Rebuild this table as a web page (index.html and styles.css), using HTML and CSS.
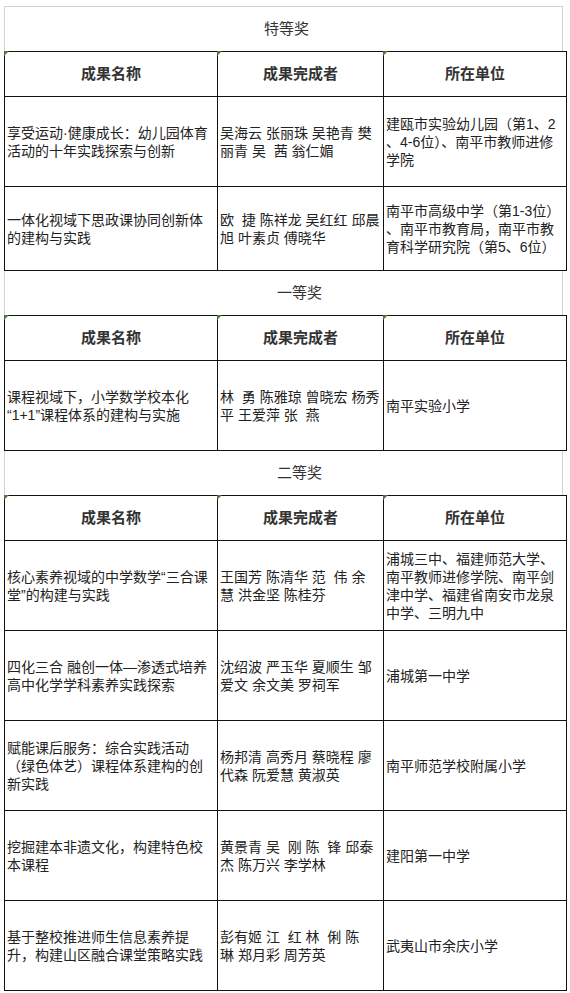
FILE: index.html
```html
<!DOCTYPE html>
<html lang="zh-CN">
<head>
<meta charset="utf-8">
<title>成果获奖名单</title>
<link rel="stylesheet" href="styles.css">
</head>
<body>
<div class="sheet">
  <section class="section">
    <div class="award award--first">特等奖</div>
    <div class="row row--head">
      <div class="cell cell--head">成果名称</div>
      <div class="cell cell--head">成果完成者</div>
      <div class="cell cell--head">所在单位</div>
    </div>
    <div class="row">
      <div class="cell">享受运动·健康成长：幼儿园体育<br>活动的十年实践探索与创新</div>
      <div class="cell">吴海云 张丽珠 吴艳青 樊<br>丽青 吴&nbsp; 茜 翁仁媚</div>
      <div class="cell">建瓯市实验幼儿园（第1、2<br>、4-6位）、南平市教师进修<br>学院</div>
    </div>
    <div class="row row--short">
      <div class="cell">一体化视域下思政课协同创新体<br>的建构与实践</div>
      <div class="cell">欧&nbsp; 捷 陈祥龙 吴红红 邱晨<br>旭 叶素贞 傅晓华</div>
      <div class="cell">南平市高级中学（第1-3位）<br>、南平市教育局，南平市教<br>育科学研究院（第5、6位）</div>
    </div>
  </section>

  <section class="section">
    <div class="award award--shift">一等奖</div>
    <div class="row row--head">
      <div class="cell cell--head">成果名称</div>
      <div class="cell cell--head">成果完成者</div>
      <div class="cell cell--head">所在单位</div>
    </div>
    <div class="row">
      <div class="cell">课程视域下，小学数学校本化<br>“1+1”课程体系的建构与实施</div>
      <div class="cell">林&nbsp; 勇 陈雅琼 曾晓宏 杨秀<br>平 王爱萍 张&nbsp; 燕</div>
      <div class="cell">南平实验小学</div>
    </div>
  </section>

  <section class="section">
    <div class="award award--shift">二等奖</div>
    <div class="row row--head">
      <div class="cell cell--head">成果名称</div>
      <div class="cell cell--head">成果完成者</div>
      <div class="cell cell--head">所在单位</div>
    </div>
    <div class="row">
      <div class="cell">核心素养视域的中学数学“三合课<br>堂”的构建与实践</div>
      <div class="cell">王国芳 陈清华 范&nbsp; 伟 余<br>慧 洪金坚 陈桂芬</div>
      <div class="cell">浦城三中、福建师范大学、<br>南平教师进修学院、南平剑<br>津中学、福建省南安市龙泉<br>中学、三明九中</div>
    </div>
    <div class="row">
      <div class="cell">四化三合 融创一体—渗透式培养<br>高中化学学科素养实践探索</div>
      <div class="cell">沈绍波 严玉华 夏顺生 邹<br>爱文 余文美 罗祠军</div>
      <div class="cell">浦城第一中学</div>
    </div>
    <div class="row">
      <div class="cell">赋能课后服务：综合实践活动<br>（绿色体艺）课程体系建构的创<br>新实践</div>
      <div class="cell">杨邦清 高秀月 蔡晓程 廖<br>代森 阮爱慧 黄淑英</div>
      <div class="cell">南平师范学校附属小学</div>
    </div>
    <div class="row">
      <div class="cell">挖掘建本非遗文化，构建特色校<br>本课程</div>
      <div class="cell">黄景青 吴&nbsp; 刚 陈&nbsp; 锋 邱泰<br>杰 陈万兴 李学林</div>
      <div class="cell">建阳第一中学</div>
    </div>
    <div class="row">
      <div class="cell">基于整校推进师生信息素养提<br>升，构建山区融合课堂策略实践</div>
      <div class="cell">彭有姬 江&nbsp; 红 林&nbsp; 俐 陈<br>琳 郑月彩 周芳英</div>
      <div class="cell">武夷山市余庆小学</div>
    </div>
  </section>
</div>
</body>
</html>
```

FILE: styles.css
```css
* {
  box-sizing: border-box;
}

html,
body {
  margin: 0;
  padding: 0;
  background: #ffffff;
}

body {
  font-family: "Liberation Sans", "Noto Sans CJK SC", sans-serif;
  font-size: 14px;
  line-height: 18px;
  color: #222222;
}

.sheet {
  width: 563px;
  margin: 6px 0 0 4px;
}

.award {
  height: 44px;
  margin-right: 4px;
  border-left: 1px solid #d2d2d2;
  border-right: 1px solid #d2d2d2;
  display: flex;
  align-items: center;
  justify-content: center;
  font-size: 15px;
  color: #333333;
}

.award--first {
  height: 45px;
  border-top: 1px solid #d2d2d2;
  padding-left: 6px;
}

.award--shift {
  padding-left: 32px;
}

.row {
  display: grid;
  grid-template-columns: 213px 166px 183px;
  border-left: 1px solid #111111;
}

.row--head {
  border-top: 1px solid #111111;
}

.cell {
  position: relative;
  height: 90px;
  display: flex;
  align-items: center;
  padding: 0 2px;
  border-right: 1px solid #111111;
  border-bottom: 1px solid #111111;
  white-space: nowrap;
}

.row--short .cell {
  height: 84px;
}

.cell--head {
  height: 45px;
  justify-content: center;
  font-size: 15px;
  font-weight: bold;
  color: #333333;
}

.cell--head::before {
  content: "";
  position: absolute;
  top: -1px;
  left: -1px;
  border-top: 5px solid #4a7a35;
  border-right: 5px solid transparent;
}
```
